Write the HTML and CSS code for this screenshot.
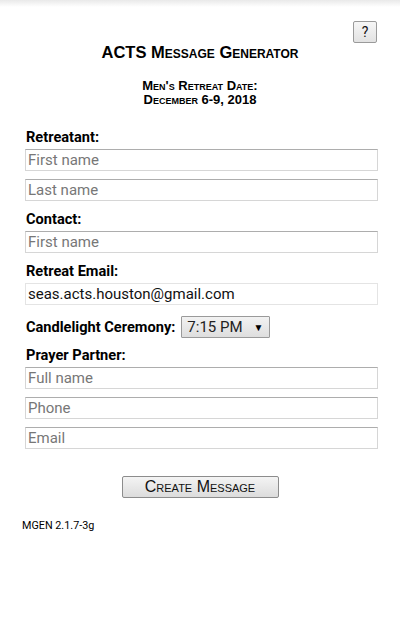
FILE: index.html
```html
<!DOCTYPE html>
<html>
<head>
<meta charset="utf-8">
<link rel="stylesheet" href="styles.css">
</head>
<body>
<div class="page">
  <div class="help-row"><button class="help-btn" type="button">?</button></div>
  <h1 class="title">ACTS Message Generator</h1>
  <div class="subtitle">Men's Retreat Date:<br>December 6-9, 2018</div>
  <form class="form">
    <div class="field">
      <label class="label">Retreatant:</label>
      <input class="input" type="text" placeholder="First name">
      <input class="input" type="text" placeholder="Last name">
    </div>
    <div class="field">
      <label class="label">Contact:</label>
      <input class="input" type="text" placeholder="First name">
    </div>
    <div class="field">
      <label class="label">Retreat Email:</label>
      <input class="input filled" type="text" value="seas.acts.houston@gmail.com">
    </div>
    <div class="field inline">
      <label class="label">Candlelight Ceremony:</label>
      <div class="select"><span>7:15 PM</span><span class="arrow">▼</span></div>
    </div>
    <div class="field">
      <label class="label">Prayer Partner:</label>
      <input class="input" type="text" placeholder="Full name">
      <input class="input" type="text" placeholder="Phone">
      <input class="input" type="text" placeholder="Email">
    </div>
    <div class="actions"><button class="create-btn" type="button">Create Message</button></div>
  </form>
  <div class="version">MGEN 2.1.7-3g</div>
</div>
</body>
</html>
```
FILE: styles.css
```css
html {
  background: #fff;
}
body {
  margin: 0;
  min-height: 619px;
  background: linear-gradient(#e9e9e9, #fff 7px) no-repeat;
  font-family: Roboto, "Liberation Sans", sans-serif;
  color: #000;
}
.page {
  padding: 21px 22px 0 22px;
}
.help-row {
  display: flex;
  justify-content: flex-end;
  padding-right: 1px;
}
.help-btn {
  width: 24px;
  height: 22px;
  padding: 0;
  border: 1px solid #9a9a9a;
  border-radius: 2px;
  background: linear-gradient(#f6f6f6, #e2e2e2);
  font-family: Roboto, sans-serif;
  font-size: 14px;
  color: #111;
}
.title {
  margin: 0;
  margin-top: -1px;
  text-align: center;
  font-family: "Liberation Sans", Arial, sans-serif;
  font-variant: small-caps;
  font-weight: bold;
  font-size: 16.5px;
  line-height: 20px;
}
.subtitle {
  margin-top: 17px;
  text-align: center;
  font-family: "Liberation Sans", Arial, sans-serif;
  font-variant: small-caps;
  font-weight: bold;
  font-size: 13px;
  line-height: 14px;
}
.form {
  padding-left: 3px;
  margin-top: 22px;
}
.field {
  display: flex;
  flex-direction: column;
  gap: 8px;
  margin-bottom: 10px;
}
.label {
  display: block;
  font-size: 14.6px;
  font-weight: bold;
  line-height: 17px;
  margin-bottom: -5px;
  padding-left: 1px;
}
.input {
  box-sizing: border-box;
  width: 100%;
  height: 22px;
  margin: 0;
  padding: 0 2px;
  border: 1px solid #d6d6d6;
  border-top-color: #adadad;
  background: #fff;
  font-family: Roboto, sans-serif;
  font-size: 15px;
  color: #111;
  outline: none;
}
.input::placeholder {
  color: #777;
}
.input.filled {
  border-color: #e4e4e4;
}
.field.inline {
  flex-direction: row;
  align-items: center;
  gap: 6px;
  margin-top: 11px;
  margin-bottom: 9px;
}
.field.inline .label {
  margin-bottom: 0;
}
.select {
  box-sizing: border-box;
  width: 89px;
  height: 22px;
  display: flex;
  align-items: center;
  justify-content: space-between;
  padding: 0 6px 0 5px;
  border: 1px solid #9a9a9a;
  border-radius: 1px;
  background: linear-gradient(#f2f2f2, #dedede);
  font-size: 15px;
  color: #222;
}
.arrow {
  font-size: 10px;
  color: #000;
}
.actions {
  display: flex;
  justify-content: center;
  margin-top: 27px;
  padding-right: 3px;
}
.create-btn {
  width: 157px;
  height: 22px;
  padding: 0;
  border: 1px solid #8c8c8c;
  border-radius: 2px;
  background: linear-gradient(#f4f4f4, #dcdcdc);
  font-family: "Liberation Sans", Arial, sans-serif;
  font-variant: small-caps;
  font-size: 16px;
  color: #111;
}
.version {
  margin-top: 22px;
  font-size: 10.8px;
  line-height: 12px;
}
```
